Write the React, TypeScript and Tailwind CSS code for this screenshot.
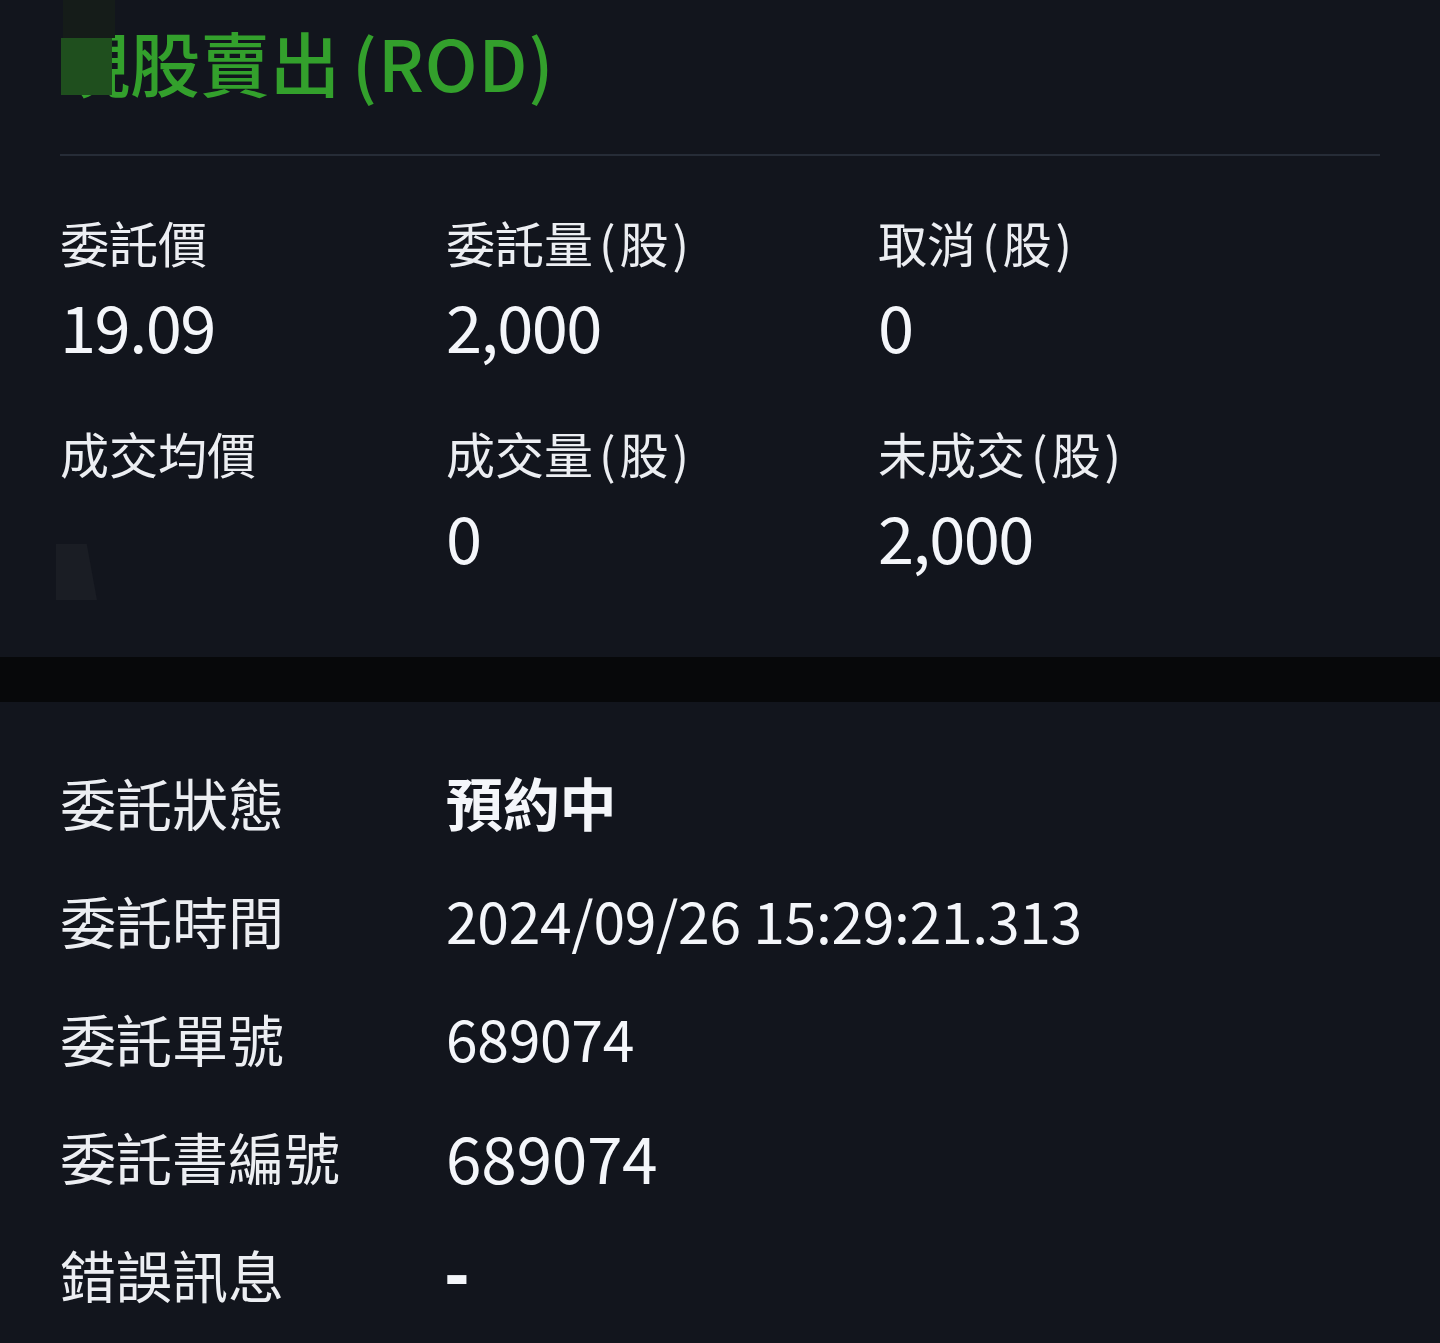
import React from 'react';

const stats = [
  { label: '委託價', value: '19.09' },
  { label: '委託量', unit: '股', value: '2,000' },
  { label: '取消', unit: '股', value: '0' },
  { label: '成交均價', value: '' },
  { label: '成交量', unit: '股', value: '0' },
  { label: '未成交', unit: '股', value: '2,000' },
];

const details = [
  { label: '委託狀態', value: '預約中', bold: true },
  { label: '委託時間', value: '2024/09/26 15:29:21.313' },
  { label: '委託單號', value: '689074' },
  { label: '委託書編號', value: '689074', big: true },
  { label: '錯誤訊息', value: '-', dash: true },
];

function Label({ text, unit }: { text: string; unit?: string }) {
  return (
    <span className="h-[60px] text-[49px] leading-[60px] text-[#eceef2] whitespace-nowrap">
      {text}
      {unit && (
        <>
          <span className="ml-[6px] mr-[4px]">(</span>
          {unit}
          <span className="ml-[4px]">)</span>
        </>
      )}
    </span>
  );
}

export default function App() {
  return (
    <div className="relative min-h-[1343px] w-full bg-[#12151d] text-[#f4f6fa] font-['Noto_Sans_CJK_TC','Noto_Sans',sans-serif]">
      {/* order summary */}
      <section className="px-[60px]">
        <div className="relative h-[154px] pt-[22px]">
          <h1 className="text-[70px] leading-[80px] font-medium text-[#33a02c] whitespace-nowrap">
            現股賣出
            <span className="ml-[12px] tracking-[1px]">(ROD)</span>
          </h1>
          {/* masked first glyph */}
          <div className="absolute left-[3px] top-0 w-[52px] h-[38px] bg-[#151c19]" />
          <div className="absolute left-[1px] top-[38px] w-[51px] h-[57px] bg-[#1f4f1e]" />
        </div>
        <div className="h-[2px] bg-[#262c37]" />

        <div className="relative grid grid-cols-[386px_432px_1fr] gap-y-[58px] pt-[56px] pb-[81px]">
          {stats.map((s) => (
            <div key={s.label} className="flex flex-col">
              <Label text={s.label} unit={s.unit} />
              <span className="mt-[13px] h-[80px] text-[65px] leading-[80px] tracking-[-1.5px]">{s.value}</span>
            </div>
          ))}
          <div className="absolute left-[-4px] top-[388px] w-[41px] h-[56px] bg-[#1a1d24] [clip-path:polygon(0_0,75%_0,100%_100%,0_100%)]" />
        </div>
      </section>

      <div className="h-[45px] bg-[#07080a]" />

      {/* order details */}
      <section className="px-[60px] pt-[41px]">
        {details.map((d) => (
          <div key={d.label} className="flex items-center h-[118px]">
            <span className="w-[386px] shrink-0 text-[56px] text-[#eceef2]">{d.label}</span>
            {d.dash ? (
              <span className="font-['DejaVu_Sans',sans-serif] text-[62px] font-semibold leading-none -ml-[2px] mt-[6px]">
                {d.value}
              </span>
            ) : (
              <span
                className={`${d.big ? 'text-[64px]' : 'text-[57px]'} ${d.bold ? 'font-bold' : ''} tracking-[-0.3px]`}
              >
                {d.value}
              </span>
            )}
          </div>
        ))}
      </section>
    </div>
  );
}
